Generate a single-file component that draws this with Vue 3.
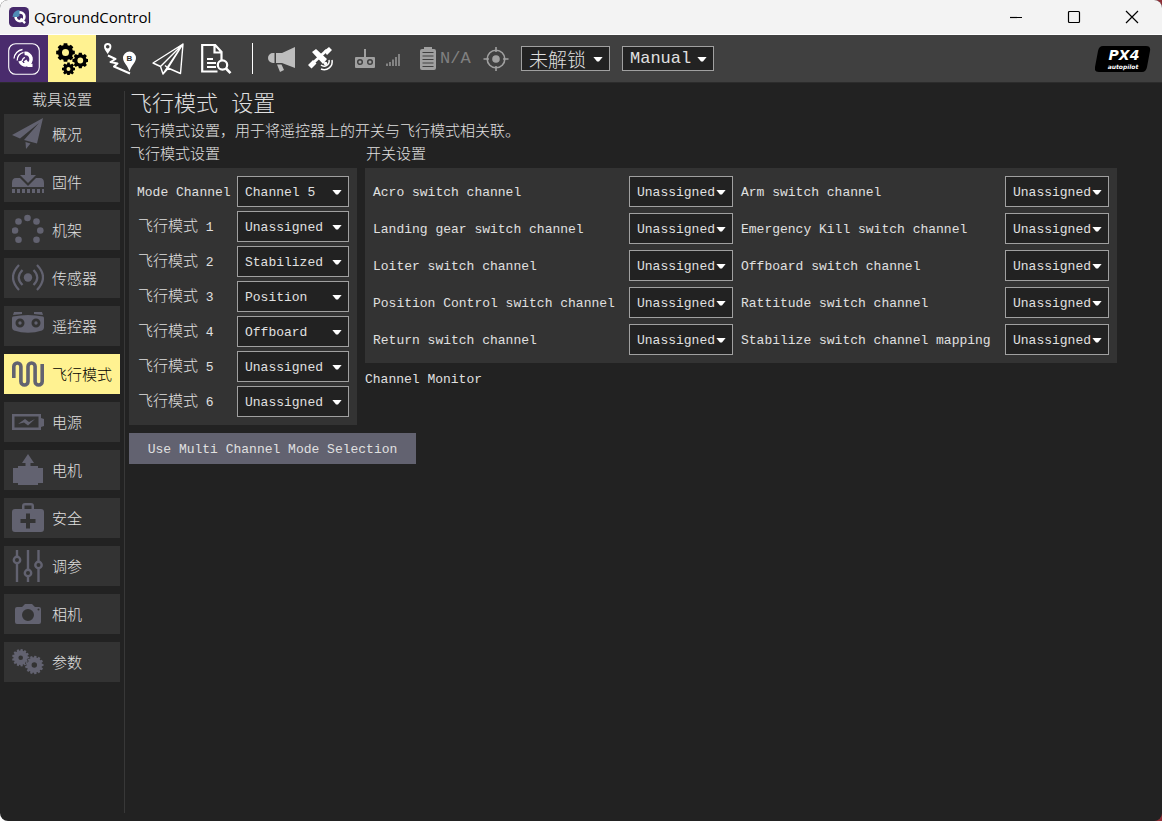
<script setup>
import { ref } from 'vue'

const gear = (cx, cy, outer, inner, hole, teeth) => {
  const pts = []
  const step = (Math.PI * 2) / teeth
  for (let i = 0; i < teeth; i++) {
    const a = i * step
    for (const [f, r] of [[-0.36, inner], [-0.24, outer], [0.24, outer], [0.36, inner]]) {
      pts.push(`${(cx + r * Math.cos(a + f * step)).toFixed(2)} ${(cy + r * Math.sin(a + f * step)).toFixed(2)}`)
    }
  }
  return `M${pts.join('L')}ZM${cx - hole} ${cy}a${hole} ${hole} 0 1 0 ${hole * 2} 0a${hole} ${hole} 0 1 0 ${-hole * 2} 0Z`
}

const toolbarGears = gear(9.5, 9.5, 9.5, 7.6, 3.5, 8) + gear(24.3, 17.5, 8, 6.3, 2.9, 8) + gear(12.5, 26, 6.6, 5, 2, 8)
const paramGears = gear(8.7, 11.7, 8.7, 7.2, 2.3, 13) + gear(22.3, 19, 9.3, 7.7, 2.7, 13)

const menu = [
  { id: 'summary', label: '概况' },
  { id: 'firmware', label: '固件' },
  { id: 'airframe', label: '机架' },
  { id: 'sensors', label: '传感器' },
  { id: 'radio', label: '遥控器' },
  { id: 'modes', label: '飞行模式' },
  { id: 'power', label: '电源' },
  { id: 'motors', label: '电机' },
  { id: 'safety', label: '安全' },
  { id: 'tuning', label: '调参' },
  { id: 'camera', label: '相机' },
  { id: 'params', label: '参数' },
]
const active = ref('modes')

const modes = ['Unassigned', 'Stabilized', 'Position', 'Offboard', 'Unassigned', 'Unassigned']

const switches = [
  'Acro switch channel', 'Arm switch channel',
  'Landing gear switch channel', 'Emergency Kill switch channel',
  'Loiter switch channel', 'Offboard switch channel',
  'Position Control switch channel', 'Rattitude switch channel',
  'Return switch channel', 'Stabilize switch channel mapping',
]
</script>

<template>
  <div class="window">
    <header class="titlebar">
      <svg class="app-icon" viewBox="0 0 20 20">
        <rect width="20" height="20" rx="4.5" fill="#46296b" />
        <circle cx="11" cy="9.8" r="4.4" fill="none" stroke="#fff" stroke-width="2.6" />
        <path d="M11.5 11.5l4.6 4.6" stroke="#fff" stroke-width="2.4" />
        <path d="M3.5 10A7 7 0 0 1 10.5 3v5.5L9 10z" fill="#4f8cb5" />
      </svg>
      <span class="app-name">QGroundControl</span>
      <div class="window-buttons">
        <button aria-label="Minimize"><svg viewBox="0 0 14 14"><path d="M1 7.5h12" /></svg></button>
        <button aria-label="Maximize"><svg viewBox="0 0 14 14"><rect x="1.5" y="1.5" width="11" height="11" rx="1" /></svg></button>
        <button aria-label="Close"><svg viewBox="0 0 14 14"><path d="M1 1l12 12M13 1L1 13" /></svg></button>
      </div>
    </header>

    <nav class="toolbar">
      <button class="tool purple" aria-label="QGroundControl">
        <svg viewBox="0 0 32 32" fill="none" stroke="#fff">
          <rect x="0.7" y="0.7" width="30.6" height="30.6" rx="7" stroke-width="1.1" />
          <path d="M16.5 10.5a5.700 5.700 0 1 1-4.500 7.500" stroke-width="3.600" />
          <path d="M17 17.500l3.500 4.800h4" stroke-width="3.200" />
          <path d="M14.200 18A4 4 0 0 1 17 14.500M9.200 17.500A8 8 0 0 1 15.500 9.300M6 15.500A10 10 0 0 1 14.500 6.500" stroke-width="1.300" />
        </svg>
      </button>
      <button class="tool yellow" aria-label="Vehicle Setup">
        <svg viewBox="0 0 32 32"><path :d="toolbarGears" fill="#000" fill-rule="evenodd" /></svg>
      </button>
      <button class="tool" aria-label="Plan">
        <svg viewBox="0 0 32 32">
          <path d="M3.7 11C2 8 0 6.200 0 3.800a3.700 3.700 0 0 1 7.400 0C7.400 6.200 5.400 8 3.700 11Z" fill="#fff" />
          <circle cx="3.7" cy="3.8" r="1.8" fill="#404040" />
          <path d="M4 12.500l7.500 3.500-5 3 7 1.500-3.500 3L26 30.500" fill="none" stroke="#fff" stroke-width="2" stroke-linejoin="round" />
          <path d="M25.500 28.500C23.500 22 19 19.500 19 15a6.500 6.500 0 0 1 13 0c0 4.500-4.500 7-6.500 13.500Z" fill="#fff" />
          <text x="25.500" y="17.500" font-size="8" font-weight="700" text-anchor="middle" fill="#303030">B</text>
        </svg>
      </button>
      <button class="tool" aria-label="Fly">
        <svg viewBox="0 0 32 32" fill="none" stroke="#fff" stroke-width="1.4" stroke-linejoin="round">
          <path d="M31 1L1 20l7.500 3.500zM31 1L8.500 23.500l2.500 7.500L31 1zM11 31l5.500-6M13 22.500l3 2.500L28.500 30.500 31 1 16 25" />
        </svg>
      </button>
      <button class="tool" aria-label="Analyze">
        <svg viewBox="0 0 32 32" fill="none" stroke="#fff" stroke-width="2.200">
          <path d="M17.500 28.500H2.200V2h13l6.300 7v8M14.500 2v7.500h7M7 16h6M7 20h9M7 24h9" />
          <circle cx="22.500" cy="22" r="4.700" />
          <path d="M26 25.500l4.500 4.700" stroke-width="2.600" />
        </svg>
      </button>
      <span class="divider"></span>
      <div class="status">
        <svg class="w28" viewBox="0 0 28 28" fill="#bdbdbd">
          <path d="M27 2v21l-13-5H8V8h6zM6.500 8v10H5A5 5 0 0 1 5 8zM9 19.500h4.500L16 25l-4 2z" />
        </svg>
        <svg class="w28" viewBox="0 0 28 28" fill="#fff">
          <path d="M17 6l5-4 3 3-5 5zM1 20l5-5 3.500 3.500-5 5zM5 7l4-3 11 10-4 5z" />
          <path d="M6 18L20 5" stroke="#fff" stroke-width="3" />
          <g fill="none" stroke="#fff" stroke-width="1.500"><path d="M14 20a5 5 0 0 0 8-5" /><path d="M14 24a8 8 0 0 0 11-9" /></g>
          <circle cx="18.500" cy="18.500" r="1.800" />
        </svg>
        <svg class="w22 rc" viewBox="0 0 22 28">
          <path d="M2 12h8V4h2v8h8q1 0 1 1v9q0 1-1 1H2q-1 0-1-1v-9q0-1 1-1z" fill="#a0a0a0" />
          <g fill="#a0a0a0" stroke="#404040" stroke-width="1.500"><circle cx="6" cy="17" r="2.300" /><circle cx="16" cy="17" r="2.300" /></g>
        </svg>
        <svg class="w14 signal" viewBox="0 0 14 28" stroke="#a0a0a0" stroke-width="1.400"><path d="M1 21v-2.500M4 21v-4M7 21v-6.500M10 21v-9M13 21V9" /></svg>
        <svg class="w18 battery" viewBox="0 0 18 28">
          <path d="M5 4V2h8v2h2q2 0 2 2v17q0 2-2 2H3q-2 0-2-2V6q0-2 2-2z" fill="#a0a0a0" />
          <path d="M3.500 7.500h11M3.500 11h11M3.500 14.500h11M3.500 18h11M3.500 21.500h11" stroke="#404040" stroke-width="1.200" />
        </svg>
        <span class="na">N/A</span>
        <svg class="w26" viewBox="0 0 26 28" fill="none" stroke="#a0a0a0" stroke-width="1.600">
          <circle cx="13" cy="14" r="8.800" /><path d="M13 2v5M13 21v5M0.500 14H6M20 14h5.500" /><circle cx="13" cy="14" r="3.800" fill="#a0a0a0" stroke="none" />
        </svg>
      </div>
      <span class="combo tool-combo arm"><select aria-label="Armed state"><option>未解锁</option></select></span>
      <span class="combo tool-combo flight"><select aria-label="Flight mode"><option>Manual</option></select></span>
      <svg class="brand" viewBox="0 0 56 26">
        <path d="M8 0h43q5 0 4 5l-3 16q-1 5-5 5H4q-5 0-4-5L3 5q1-5 5-5z" fill="#000" />
        <text x="29" y="14" class="px4">PX4</text>
        <text x="28" y="23" class="autopilot">autopilot</text>
      </svg>
    </nav>

    <div class="body">
      <aside class="sidebar">
        <h2>载具设置</h2>
        <button v-for="m in menu" :key="m.id" class="item" :class="{ active: active === m.id }" @click="active = m.id">
          <svg viewBox="0 0 32 32" fill="currentColor">
            <path v-if="m.id === 'summary'" d="M31 0L0 17l8 3.500L27 5 12 22l13 3.500zM13.500 24l5 1.500-4.500 5.500z" />
            <path v-else-if="m.id === 'firmware'" d="M13 1h6v8h5l-8 8-8-8h5zM4 12h4l8 8 8-8h4q4 0 4 5v4H0v-4q0-5 4-5zM0 23h3v4H0zm5 0h3v4H5zm5 0h3v4h-3zm5 0h3v4h-3zm5 0h3v4h-3zm5 0h3v4h-3zm5 0h2v4h-2z" />
            <g v-else-if="m.id === 'airframe'">
              <circle cx="15.500" cy="4" r="3.300" /><circle cx="6.500" cy="7.500" r="3.300" /><circle cx="24.500" cy="7.500" r="3.300" /><circle cx="3" cy="16.500" r="3.300" /><circle cx="28.300" cy="16.500" r="3.300" /><circle cx="6.500" cy="25.700" r="3.300" /><circle cx="24.500" cy="25.700" r="3.300" />
            </g>
            <g v-else-if="m.id === 'sensors'">
              <circle cx="16" cy="15.500" r="4.200" />
              <path d="M10.500 8Q3 15.500 10.500 23M21.500 8Q29 15.500 21.500 23M7 3Q-5 15.500 7 28M25 3Q37 15.500 25 28" fill="none" stroke="currentColor" stroke-width="2.200" />
            </g>
            <path v-else-if="m.id === 'radio'" fill-rule="evenodd" d="M1 5l1-3h8v2zM31 5l-1-3h-8v2zM1 6.500Q16 3.500 31 6.500q1 0 1 2v9q0 2-2 3Q16 25 2 20.500 0 19.500 0 17.500v-9q0-2 1-2zM3.500 13a4.500 4.500 0 1 0 9 0a4.500 4.500 0 1 0-9 0M19.500 13a4.500 4.500 0 1 0 9 0a4.500 4.500 0 1 0-9 0M6.300 13a1.700 1.700 0 1 0 3.400 0a1.700 1.700 0 1 0-3.400 0M22.300 13a1.700 1.700 0 1 0 3.400 0a1.700 1.700 0 1 0-3.400 0" />
            <path v-else-if="m.id === 'modes'" fill="none" stroke="currentColor" stroke-width="3.600" d="M1.800 20V8.500a3.500 3.500 0 0 1 7.100 0v15a3.500 3.500 0 0 0 7.100 0v-15a3.500 3.500 0 0 1 7.100 0v15a3.500 3.500 0 0 0 7.100 0V6" />
            <path v-else-if="m.id === 'power'" fill-rule="evenodd" d="M0 8h29v4l3 1v7l-3 1v3H0zM2.500 10.500v11h24v-11zM6 18l7-5 4 3 6-3-7 6.500-4-3z" />
            <path v-else-if="m.id === 'motors'" d="M16 0l6 9h-3.500v3H26v2h5v15h-5v2H6v-2H1V14h5v-2h7.500V9H10z" />
            <path v-else-if="m.id === 'safety'" fill-rule="evenodd" d="M3 7h7V4q0-3 3-3h6q3 0 3 3v3h7q3 0 3 3v17q0 3-3 3H3q-3 0-3-3V10q0-3 3-3zM12.500 7h7V3.500h-7zM14 11.500v5.500H8.500v4H14v5.500h4V21h5.500v-4H18v-5.500z" />
            <g v-else-if="m.id === 'tuning'" fill="none" stroke="currentColor" stroke-width="2.400">
              <path d="M5 0v7M5 13v19M16 0v20M16 26v6M26.500 0v12M26.500 18v14" /><circle cx="5" cy="10" r="3.200" /><circle cx="16" cy="23" r="3.200" /><circle cx="26.500" cy="15" r="3.200" />
            </g>
            <path v-else-if="m.id === 'camera'" fill-rule="evenodd" d="M5 9h5l3-3h7l3 3h4q2 0 2 2v13q0 2-2 2H5q-2 0-2-2V11q0-2 2-2zM10 17a6 6 0 1 0 12 0a6 6 0 1 0-12 0M25.500 11.500a1 1 0 1 0 2 0a1 1 0 1 0-2 0" />
            <path v-else :d="paramGears" fill-rule="evenodd" />
          </svg>
          <span>{{ m.label }}</span>
        </button>
      </aside>

      <main class="content">
        <h1>飞行模式 设置</h1>
        <p>飞行模式设置，用于将遥控器上的开关与飞行模式相关联。</p>
        <div class="columns">
          <section>
            <h3>飞行模式设置</h3>
            <div class="panel modes">
              <div class="row">
                <label for="mode-channel">Mode Channel</label>
                <span class="combo"><select id="mode-channel"><option>Channel 5</option></select></span>
              </div>
              <div v-for="(m, i) in modes" :key="i" class="row">
                <label :for="'mode' + i" class="cjk">飞行模式<span class="number">&nbsp;{{ i + 1 }}</span></label>
                <span class="combo"><select :id="'mode' + i"><option>{{ m }}</option></select></span>
              </div>
            </div>
            <button class="multi">Use Multi Channel Mode Selection</button>
          </section>
          <section>
            <h3>开关设置</h3>
            <div class="panel switches">
              <template v-for="(s, i) in switches" :key="s">
                <label :for="'switch' + i">{{ s }}</label>
                <span class="combo"><select :id="'switch' + i"><option>Unassigned</option></select></span>
              </template>
            </div>
            <div class="monitor">Channel Monitor</div>
          </section>
        </div>
      </main>
    </div>
  </div>
</template>

<style>
html {
  background: linear-gradient(90deg, #fff 50%, #8f3038 50%);
}
</style>

<style scoped>
* {
  box-sizing: border-box;
}
.window {
  display: flex;
  flex-direction: column;
  min-height: 100vh;
  border-radius: 8px;
  overflow: hidden;
  background: #222;
  color: #e0e0e0;
  font: 300 13px/16px "Liberation Mono", "Noto Sans CJK SC", monospace;
}
button,
select {
  margin: 0;
  border: 0;
  border-radius: 0;
  font: inherit;
  color: inherit;
}
svg {
  display: block;
  flex: none;
}
h1, h2, h3, p {
  margin: 0;
  font-weight: 300;
}
h2, h3, p, .item, .arm select {
  font-family: "Noto Sans CJK SC", sans-serif;
}
.titlebar {
  display: flex;
  align-items: center;
  height: 35px;
  padding: 0 1px 0 9px;
  background: #f3f3f3;
  border-bottom: 1px solid #fff;
  color: #000;
}
.app-icon {
  width: 20px;
  height: 20px;
}
.app-name {
  margin-left: 5px;
  font: 400 15px/20px "Open Sans", sans-serif;
}
.window-buttons {
  display: flex;
  margin-left: auto;
}
.window-buttons button {
  display: flex;
  align-items: center;
  justify-content: center;
  width: 58px;
  height: 32px;
  padding: 0;
  background: none;
}
.window-buttons svg {
  width: 14px;
  height: 14px;
  fill: none;
  stroke: #000;
  stroke-width: 1.2;
}
.toolbar {
  display: flex;
  align-items: center;
  height: 48px;
  padding-right: 11px;
  background: #404040;
  border-bottom: 1px solid #2c2c2c;
}
.tool {
  display: flex;
  align-items: center;
  justify-content: center;
  width: 48px;
  height: 47px;
  padding: 0;
  background: none;
}
.tool svg {
  width: 32px;
  height: 32px;
}
.tool text {
  font-family: "Liberation Sans", sans-serif;
}
.purple {
  background: #4a2c6d;
}
.yellow {
  background: #fff291;
}
.divider {
  width: 1px;
  height: 31px;
  margin: 0 15px 0 12px;
  background: #fff;
}
.status {
  display: flex;
  align-items: center;
}
.status svg {
  height: 28px;
}
.w28 {
  width: 28px;
  margin-right: 11px;
}
.w22 {
  width: 22px;
}
.w14 {
  width: 14px;
}
.w18 {
  width: 18px;
}
.w26 {
  width: 26px;
}
.rc {
  margin: 0 10px 0 8px;
}
.battery {
  margin: 0 3px 0 19px;
}
.na {
  width: 43px;
  font-size: 17px;
  color: #808080;
}
.combo {
  position: relative;
  display: block;
}
.combo::after {
  content: "";
  position: absolute;
  right: 7px;
  top: 50%;
  width: 10px;
  height: 5px;
  margin-top: -2px;
  background: #fff;
  clip-path: polygon(0 0, 100% 0, 60% 100%, 40% 100%);
  pointer-events: none;
}
.combo select {
  display: block;
  appearance: none;
  width: 100%;
  height: 31px;
  padding: 2px 0 0 7px;
  border: 1px solid #a0a0a0;
  background: #222;
  line-height: 16px;
}
.tool-combo select {
  height: 25px;
  padding-top: 1px;
  font-size: 17px;
  line-height: 22px;
}
.arm {
  width: 89px;
  margin: 0 12px;
}
.arm select {
  padding-top: 0;
  font-size: 19px;
}
.flight {
  width: 92px;
}
.brand {
  width: 56px;
  height: 26px;
  margin-left: auto;
}
.brand text {
  fill: #fff;
  text-anchor: middle;
  font-family: "DejaVu Sans", sans-serif;
  font-style: italic;
  font-weight: 700;
}
.brand .px4 {
  font-size: 14px;
}
.brand .autopilot {
  font-size: 6px;
}
.body {
  display: flex;
  flex: 1;
  padding: 8px 4px 8px;
}
.sidebar {
  display: flex;
  flex-direction: column;
  gap: 8px;
  width: 121px;
  padding-right: 4px;
  border-right: 1px solid #383838;
}
.sidebar h2 {
  height: 15px;
  font-size: 15px;
  line-height: 15px;
  text-align: center;
}
.item {
  display: flex;
  align-items: center;
  gap: 8px;
  height: 40px;
  padding: 0 0 0 8px;
  background: #333;
  font-size: 15px;
  white-space: nowrap;
}
.item svg {
  width: 32px;
  height: 32px;
  color: #626270;
}
.item.active {
  background: #fff291;
  color: #000;
}
.content {
  flex: 1;
  min-width: 0;
  padding-left: 4px;
}
h1 {
  padding: 3px 0 0 1px;
  font-size: 22px;
  line-height: 24px;
}
p {
  padding-left: 1px;
  font-size: 15px;
  line-height: 24px;
}
h3 {
  padding-left: 1px;
  height: 26px;
  font-size: 15px;
  line-height: 22px;
}
.columns {
  display: flex;
  align-items: flex-start;
  gap: 8px;
}
.columns section:first-child {
  width: 228px;
}
.panel {
  padding: 8px;
  background: #333;
}
.modes {
  display: grid;
  gap: 4px;
}
.row {
  display: grid;
  grid-template-columns: 1fr 112px;
  align-items: center;
}
.switches {
  display: grid;
  grid-template-columns: 248px 104px 256px 104px;
  gap: 6px 8px;
  align-items: center;
}
label {
  padding-top: 2px;
  white-space: nowrap;
}
.cjk {
  padding: 3px 0 0 1px;
  font-size: 15px;
}
.number {
  font-size: 13px;
}
.multi {
  width: 287px;
  height: 31px;
  margin-top: 8px;
  padding: 2px 0 0;
  background: #626270;
  white-space: nowrap;
}
.monitor {
  margin-top: 9px;
}
</style>
